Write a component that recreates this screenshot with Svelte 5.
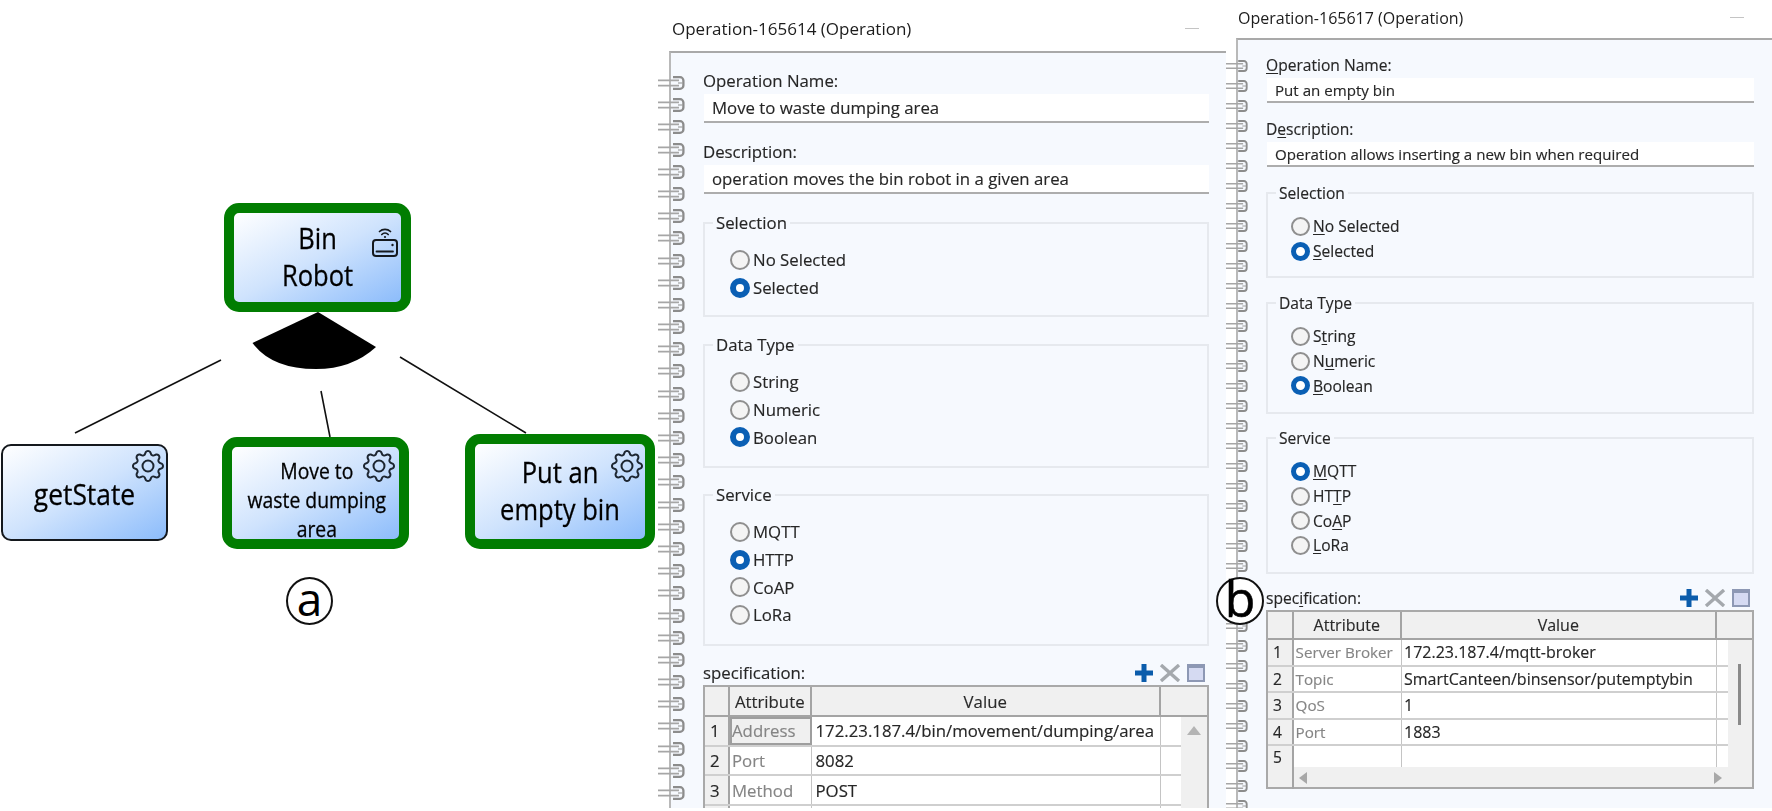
<script>
  const gearA = "M8 4.754a3.246 3.246 0 1 0 0 6.492 3.246 3.246 0 0 0 0-6.492zM5.754 8a2.246 2.246 0 1 1 4.492 0 2.246 2.246 0 0 1-4.492 0z";
  const gearB = "M9.796 1.343c-.527-1.79-3.065-1.79-3.592 0l-.094.319a.873.873 0 0 1-1.255.52l-.292-.16c-1.64-.892-3.433.902-2.54 2.541l.159.292a.873.873 0 0 1-.52 1.255l-.319.094c-1.79.527-1.79 3.065 0 3.592l.319.094a.873.873 0 0 1 .52 1.255l-.16.292c-.892 1.64.901 3.434 2.541 2.54l.292-.159a.873.873 0 0 1 1.255.52l.094.319c.527 1.79 3.065 1.79 3.592 0l.094-.319a.873.873 0 0 1 1.255-.52l.292.16c1.64.893 3.434-.902 2.54-2.541l-.159-.292a.873.873 0 0 1 .52-1.255l.319-.094c1.79-.527 1.79-3.065 0-3.592l-.319-.094a.873.873 0 0 1-.52-1.255l.16-.292c.893-1.64-.902-3.433-2.541-2.54l-.292.159a.873.873 0 0 1-1.255-.52l-.094-.319zm-2.633.283c.246-.835 1.428-.835 1.674 0l.094.319a1.873 1.873 0 0 0 2.693 1.115l.291-.16c.764-.415 1.6.42 1.184 1.185l-.159.292a1.873 1.873 0 0 0 1.116 2.692l.318.094c.835.246.835 1.428 0 1.674l-.319.094a1.873 1.873 0 0 0-1.115 2.693l.16.291c.415.764-.42 1.6-1.185 1.184l-.291-.159a1.873 1.873 0 0 0-2.693 1.116l-.094.318c-.246.835-1.428.835-1.674 0l-.094-.319a1.873 1.873 0 0 0-2.692-1.115l-.292.16c-.764.415-1.6-.42-1.184-1.185l.159-.291A1.873 1.873 0 0 0 1.945 8.93l-.319-.094c-.835-.246-.835-1.428 0-1.674l.319-.094A1.873 1.873 0 0 0 3.06 4.377l-.16-.292c-.415-.764.42-1.6 1.185-1.184l.292.159a1.873 1.873 0 0 0 2.692-1.115l.094-.319z";

  const nodes = [
    { cls: "n-state", lines: ["getState"] },
    { cls: "n-move", lines: ["Move to", "waste dumping", "area"] },
    { cls: "n-put", lines: ["Put an", "empty bin"] },
  ];

  const panels = [
    {
      cls: "p1",
      title: "Operation-165614 (Operation)",
      ports: 33,
      name: "Move to waste dumping area",
      desc: "operation moves the bin robot in a given area",
      groups: [
        { title: "Selection", on: 1, items: ["|No Selected", "|Selected"] },
        { title: "Data Type", on: 2, items: ["|String", "|Numeric", "|Boolean"] },
        { title: "Service", on: 1, items: ["|MQTT", "|HTTP", "|CoAP", "|LoRa"] },
      ],
      rows: [
        ["1", "Address", "172.23.187.4/bin/movement/dumping/area"],
        ["2", "Port", "8082"],
        ["3", "Method", "POST"],
        ["", "", ""],
      ],
    },
    {
      cls: "p2",
      title: "Operation-165617 (Operation)",
      ports: 38,
      name: "Put an empty bin",
      desc: "Operation allows inserting a new bin when required",
      groups: [
        { title: "Selection", on: 1, items: ["N|o Selected", "S|elected"] },
        { title: "Data Type", on: 2, items: ["S|t|ring", "N|u|meric", "B|oolean"] },
        { title: "Service", on: 0, items: ["M|QTT", "HTT|P", "Co|A|P", "L|oRa"] },
      ],
      rows: [
        ["1", "Server Broker", "172.23.187.4/mqtt-broker"],
        ["2", "Topic", "SmartCanteen/binsensor/putemptybin"],
        ["3", "QoS", "1"],
        ["4", "Port", "1883"],
        ["5", "", ""],
      ],
    },
  ];

  // "pre|mark|post" marks the mnemonic letter; "|text" has none, "X|rest" marks X.
  function parts(s) {
    const p = s.split("|");
    if (p.length === 3) return p;
    if (p[0] === "") return [p[1], "", ""];
    if (p[1] === "") return ["", "", p[0]];
    return p[0].length > 1 ? [p[0].slice(0, -1), p[0].slice(-1), p[1]] : ["", p[0], p[1]];
  }
</script>

{#snippet gear()}
  <svg class="gear" viewBox="0 0 16 16" fill="#1c2530">
    <path d={gearA} />
    <path d={gearB} />
  </svg>
{/snippet}

{#snippet port()}
  <svg class="port" viewBox="0 0 27 14" preserveAspectRatio="none" fill="none">
    <path d="M0 4.4H21M0 9.6H21" stroke="#a6a6a6" stroke-width="1.7" />
    <path d="M15 1.2H22a3.4 3.4 0 0 1 3.4 3.4v4.8a3.4 3.4 0 0 1-3.4 3.4H15" stroke="#8c8c8c" stroke-width="2.3" />
    <path d="M20 7H25" stroke="#a0a0a0" stroke-width="1.2" />
  </svg>
{/snippet}

{#snippet mark(s)}
  {@const p = parts(s)}{p[0]}<u>{p[1]}</u>{p[2]}
{/snippet}

{#snippet panel(p)}
  <section class="panel {p.cls}">
    <header class="titlebar">
      <span class="title">{p.title}</span>
      <span class="min"></span>
    </header>
    <div class="ports">
      {#each Array(p.ports) as _}
        {@render port()}
      {/each}
    </div>
    <div class="body">
      <div class="label lab-first">{@render mark(p.cls === "p2" ? "O|peration Name:" : "|Operation Name:")}</div>
      <div class="field">{p.name}</div>
      <div class="label lab-second">{#if p.cls === "p2"}D<u>e</u>scription:{:else}Description:{/if}</div>
      <div class="field">{p.desc}</div>

      {#each p.groups as g, gi}
        <fieldset class="group g{gi}">
          <legend>{g.title}</legend>
          {#each g.items as it, i}
            <div class="radio-row">
              <span class="radio" class:on={g.on === i}></span>
              <span>{@render mark(it)}</span>
            </div>
          {/each}
        </fieldset>
      {/each}

      <div class="spec-head">
        <span class="label">{#if p.cls === "p2"}spec<u>i</u>fication:{:else}specification:{/if}</span>
        <div class="tools">
          <svg viewBox="0 0 18 18" class="tool"><path d="M6.5 0h5v6.5H18v5h-6.5V18h-5v-6.5H0v-5h6.5z" fill="#0b5cab" /></svg>
          <svg viewBox="0 0 22 18" class="tool tool-x" preserveAspectRatio="none"><path d="M2 1l18 16M20 1L2 17" stroke="#a4a8ad" stroke-width="3.4" fill="none" /></svg>
          <svg viewBox="0 0 18 18" class="tool"><rect x="1" y="1" width="16" height="16" fill="#d5daf2" stroke="#8d98b4" stroke-width="2" /><path d="M1 3h16" stroke="#8d98b4" stroke-width="2" /></svg>
        </div>
      </div>

      <div class="tbl">
        <div class="thead">
          <div class="th idx"></div>
          <div class="th">Attribute</div>
          <div class="th">Value</div>
          <div class="th last"></div>
        </div>
        <div class="tbody">
          <div class="rows">
            {#each p.rows as r, i}
              <div class="tr">
                <div class="td idx">{r[0]}</div>
                <div class="td attr" class:sel={p.cls === "p1" && i === 0}>{r[1]}</div>
                <div class="td val">{r[2]}</div>
                <div class="td"></div>
              </div>
            {/each}
          </div>
          <div class="vbar">
            {#if p.cls === "p1"}
              <span class="arrow-up"></span>
            {:else}
              <span class="thumb"></span>
            {/if}
          </div>
        </div>
        {#if p.cls === "p2"}
          <div class="hbar">
            <div class="hbar-idx"></div>
            <span class="arrow-l"></span>
            <span class="arrow-r"></span>
          </div>
        {/if}
      </div>
    </div>
    {#if p.cls === "p2"}
      <div class="badge badge-b">b</div>
    {/if}
  </section>
{/snippet}

<main class="page">
  <section class="diagram">
    <svg class="links" viewBox="0 0 651 811" width="651" height="811">
      <path d="M221 360L75 433M321 391L330 437M400 357L526 433" stroke="#111" stroke-width="1.6" fill="none" />
      <path d="M318 312L252.5 343Q272 369 316 369Q352 369 376 347Z" fill="#000" />
    </svg>

    <div class="node n-robot">
      <div class="txt">
        <span>Bin</span>
        <span>Robot</span>
      </div>
      <svg class="router" viewBox="0 0 26 30" fill="none" stroke="#15191e" stroke-linecap="round">
        <path d="M7.5 4.5a8 8 0 0 1 11 0M9.8 7.5a4.6 4.6 0 0 1 6.4 0" stroke-width="1.7" />
        <circle cx="13" cy="10" r="1.1" fill="#15191e" stroke="none" />
        <rect x="1" y="13" width="24" height="16" rx="3" stroke-width="2" />
        <path d="M4.5 24.5H21" stroke-width="1.8" />
        <circle cx="20.5" cy="18" r="1.2" fill="#15191e" stroke="none" />
      </svg>
    </div>

    {#each nodes as n}
      <div class="node {n.cls}">
        <div class="txt">
          {#each n.lines as l}<span>{l}</span>{/each}
        </div>
        {@render gear()}
      </div>
    {/each}

    <div class="badge badge-a">a</div>
  </section>

  {#each panels as p}
    {@render panel(p)}
  {/each}
</main>

<style>
  :global(body) {
    margin: 0;
    background: #fff;
    overflow: hidden;
  }
  .page {
    display: flex;
    width: 1772px;
    height: 811px;
    overflow: hidden;
    font-family: "Open Sans", "Liberation Sans", sans-serif;
    color: #262626;
  }

  /* diagram: free canvas */
  .diagram {
    position: relative;
    flex: 0 0 651px;
    height: 811px;
    z-index: 2;
    color: #000;
  }
  .links {
    position: absolute;
    left: 0;
    top: 0;
  }
  .node {
    position: absolute;
    box-sizing: border-box;
    background: linear-gradient(to bottom right, #fff 0%, #cfe3fd 50%, #8cbcfb 100%);
    border: 10px solid #017d01;
    border-radius: 15px;
  }
  .txt {
    position: absolute;
    inset: 0;
    display: flex;
    flex-direction: column;
    align-items: center;
    justify-content: center;
    font-size: 29px;
    line-height: 37px;
    transform: scaleX(0.88);
    white-space: nowrap;
    -webkit-text-stroke: 0.3px #000;
  }
  .txt span {
    display: block;
  }
  .n-robot {
    left: 224px;
    top: 203px;
    width: 187px;
    height: 109px;
  }
  .n-robot .txt {
    padding-bottom: 4px;
  }
  .n-state {
    left: 1px;
    top: 444px;
    width: 167px;
    height: 97px;
    border: 2px solid #14181d;
    border-radius: 10px;
  }
  .n-state .txt {
    padding-top: 2px;
    font-size: 30px;
  }
  .n-move {
    left: 222px;
    top: 437px;
    width: 187px;
    height: 112px;
  }
  .n-move .txt {
    font-size: 22px;
    line-height: 29px;
    padding-top: 13px;
    padding-left: 3px;
  }
  .n-put {
    left: 465px;
    top: 434px;
    width: 190px;
    height: 115px;
  }
  .n-put .txt {
    padding-bottom: 4px;
  }
  .gear {
    position: absolute;
    width: 32px;
    height: 32px;
  }
  .n-state .gear {
    right: 2px;
    top: 4px;
  }
  .n-move .gear {
    right: 4px;
    top: 3px;
  }
  .n-put .gear {
    right: 2px;
    top: 6px;
  }
  .router {
    position: absolute;
    right: 3px;
    top: 14px;
    width: 26px;
    height: 30px;
  }
  .badge {
    position: absolute;
    z-index: 3;
    box-sizing: border-box;
    display: flex;
    align-items: center;
    justify-content: center;
    width: 47px;
    height: 48px;
    border: 2px solid #111;
    border-radius: 50%;
    background: #fff;
    font-size: 46px;
    line-height: 1;
    color: #000;
    padding-bottom: 6px;
  }
  .badge-a {
    left: 286px;
    top: 577px;
  }
  .badge-b {
    left: -10px;
    top: 577px;
    width: 48px;
    font-size: 50px;
    padding-bottom: 7px;
    -webkit-text-stroke: 0.6px #000;
  }

  /* panels */
  .panel {
    position: relative;
    height: 811px;
    box-sizing: border-box;
  }
  .p1 {
    flex: 0 0 575px;
    font-size: 16.8px;
    --title-h: 51px;
    --body-left: 18px;
    --pad-x: 32px;
    --pad-right: 17px;
  }
  .p2 {
    flex: 1 1 auto;
    min-width: 0;
    font-size: 15.6px;
    --title-h: 37.5px;
    --body-left: 10px;
    --pad-x: 28px;
    --pad-right: 18px;
  }
  .titlebar {
    display: flex;
    align-items: center;
    justify-content: space-between;
    box-sizing: border-box;
    height: var(--title-h);
    color: #1c1c1c;
    filter: blur(0.3px);
  }
  .p1 .titlebar {
    padding: 5px 27px 0 21px;
    font-size: 17px;
  }
  .p2 .titlebar {
    padding: 0 28px 2px 12px;
    font-size: 16px;
  }
  .min {
    width: 14px;
    height: 1px;
    background: #c4c4c4;
  }
  .body {
    box-sizing: border-box;
    margin-left: var(--body-left);
    height: calc(808px - var(--title-h));
    overflow: hidden;
    background: #f6f9fe;
    border-top: 2px solid #a9a9a9;
    border-left: 2px solid #b9b9b9;
    padding-left: var(--pad-x);
    padding-right: var(--pad-right);
    filter: blur(0.4px);
    -webkit-text-stroke: 0.15px currentColor;
  }
  .ports {
    position: absolute;
    z-index: 1;
    display: flex;
    flex-direction: column;
    overflow: hidden;
    height: 732px;
    filter: blur(0.5px);
  }
  .p1 .ports {
    left: 7px;
    top: 76px;
    gap: 8.2px;
  }
  .p2 .ports {
    left: 0;
    top: 60px;
    height: 748px;
    gap: 8px;
  }
  .port {
    display: block;
    flex: none;
    width: 27px;
    height: 14px;
  }
  .p2 .port {
    width: 22px;
    height: 12px;
  }
  .label {
    line-height: 20px;
    height: 20px;
    white-space: nowrap;
  }
  u {
    text-decoration: none;
  }
  .p2 u {
    text-decoration: underline;
    text-underline-offset: 2px;
  }
  .p1 .lab-first {
    margin-top: 18px;
    margin-bottom: 3px;
  }
  .p1 .lab-second {
    margin-top: 19px;
    margin-bottom: 3px;
  }
  .p2 .lab-first {
    margin-top: 15.5px;
    margin-bottom: 3px;
  }
  .p2 .lab-second {
    margin-top: 16px;
    margin-bottom: 3px;
  }
  .field {
    box-sizing: border-box;
    background: #fff;
    border-bottom: 2px solid #adadad;
    padding-left: 8px;
    display: flex;
    align-items: center;
    white-space: nowrap;
    margin-left: 1px;
  }
  .p1 .field {
    height: 29px;
  }
  .p2 .field {
    height: 25px;
    font-size: 15.1px;
  }
  .group {
    margin: 0;
    box-sizing: border-box;
    border: 2px solid #e6e9ee;
    min-width: 0;
    padding: 0;
  }
  legend {
    padding: 0 3px;
    margin-left: 8px;
    line-height: 20px;
  }
  .radio-row {
    display: flex;
    align-items: center;
    gap: 3px;
    white-space: nowrap;
    margin-left: 25px;
  }
  .p2 .radio-row {
    margin-left: 23px;
  }
  .p1 .group {
    padding-top: 13px;
  }
  .p2 .group {
    padding-top: 11px;
  }
  .p1 .g0 {
    margin-top: 19px;
    height: 104px;
  }
  .p1 .g1 {
    margin-top: 18px;
    height: 133px;
  }
  .p1 .g2 {
    margin-top: 17px;
    height: 161px;
  }
  .p2 .g0 {
    margin-top: 16px;
    height: 95px;
  }
  .p2 .g1 {
    margin-top: 15px;
    height: 121px;
  }
  .p2 .g2 {
    margin-top: 14px;
    height: 146px;
  }
  .p1 .radio-row {
    height: 27.7px;
  }
  .p2 .radio-row {
    height: 24.7px;
  }
  .radio {
    box-sizing: border-box;
    flex: none;
    width: 20px;
    height: 20px;
    border-radius: 50%;
    border: 2px solid #8f8f8f;
    background: #f4f4f4;
  }
  .radio.on {
    border: 6px solid #0a5fb4;
    background: #fff;
  }
  .p2 .radio {
    width: 19px;
    height: 19px;
  }
  .p2 .radio.on {
    border-width: 5.5px;
  }
  .spec-head {
    display: flex;
    align-items: center;
    justify-content: space-between;
  }
  .p1 .spec-head {
    height: 25px;
    margin-top: 14px;
    padding-right: 4px;
  }
  .p2 .spec-head {
    height: 24px;
    margin-top: 12px;
    padding-right: 4px;
  }
  .tools {
    display: flex;
    align-items: center;
    gap: 6px;
  }
  .tool {
    display: block;
    width: 18px;
    height: 18px;
  }
  .tool-x {
    width: 22px;
  }
  .tbl {
    box-sizing: border-box;
    border: 2px solid #a9a9a9;
    background: #f0f0f0;
  }
  .p1 .tbl {
    --c0: 25px;
    --c1: 81.5px;
    --c2: 349.5px;
    --h-head: 28px;
    --h-row: 29.7px;
    height: 140px;
  }
  .p2 .tbl {
    --c0: 25.6px;
    --c1: 108.4px;
    --c2: 314.6px;
    --h-head: 26px;
    --h-row: 26.5px;
    height: 179px;
  }
  .thead {
    display: grid;
    grid-template-columns: var(--c0) var(--c1) var(--c2) 1fr;
    height: var(--h-head);
    border-bottom: 2px solid #a4a4a4;
  }
  .th {
    display: flex;
    align-items: center;
    justify-content: center;
    border-right: 2px solid #a4a4a4;
    box-sizing: border-box;
    color: #2a2a2a;
  }
  .p2 .th {
    font-size: 16px;
  }
  .th.last {
    border-right: 0;
  }
  .tbody {
    display: flex;
  }
  .rows {
    flex: 1;
    background: #fff;
  }
  .tr {
    display: grid;
    grid-template-columns: var(--c0) var(--c1) var(--c2) 1fr;
    height: var(--h-row);
  }
  .tr:not(:last-child) {
    border-bottom: 2px solid #cfcfcf;
    box-sizing: border-box;
  }
  .p2 .tr:last-child {
    height: 21px;
  }
  .td {
    display: flex;
    align-items: center;
    box-sizing: border-box;
    padding-left: 4px;
    white-space: nowrap;
    overflow: hidden;
    border-right: 1.5px solid #c4c4c4;
  }
  .td:last-child {
    border-right: 0;
  }
  .td.idx {
    background: #f0f0f0;
    padding-left: 5px;
    border-right: 2px solid #a4a4a4;
  }
  .td.attr {
    color: #858585;
  }
  .p1 .td.attr {
    padding-left: 2px;
  }
  .p2 .td.attr {
    padding-left: 2px;
    font-size: 15.2px;
  }
  .p2 .td.val {
    padding-left: 2px;
    font-size: 16px;
  }
  .td.attr.sel {
    background: #f0f0f0;
    outline: 2px solid #9e9e9e;
    outline-offset: -2px;
  }
  .vbar {
    position: relative;
    flex: none;
    background: #f0f0f0;
  }
  .p1 .vbar {
    width: 26px;
  }
  .p2 .vbar {
    width: 24px;
  }
  .arrow-up {
    position: absolute;
    left: 6px;
    top: 9px;
    border: 6px solid transparent;
    border-top: 0;
    border-left-width: 7px;
    border-right-width: 7px;
    border-bottom: 9px solid #b4b4b4;
  }
  .thumb {
    position: absolute;
    left: 10px;
    top: 24px;
    width: 3px;
    height: 61px;
    background: #8a8a8a;
  }
  .hbar {
    position: relative;
    height: 23px;
  }
  .hbar-idx {
    position: absolute;
    left: 0;
    top: 0;
    bottom: 1px;
    width: 25.6px;
    box-sizing: border-box;
    border-right: 2px solid #a4a4a4;
  }
  .arrow-l,
  .arrow-r {
    position: absolute;
    top: 5px;
    border: 5px solid transparent;
    border-top-width: 6px;
    border-bottom-width: 6px;
  }
  .arrow-l {
    left: 31px;
    border-left: 0;
    border-right: 8px solid #a8a8a8;
  }
  .arrow-r {
    left: 446px;
    border-right: 0;
    border-left: 8px solid #a8a8a8;
  }
</style>
